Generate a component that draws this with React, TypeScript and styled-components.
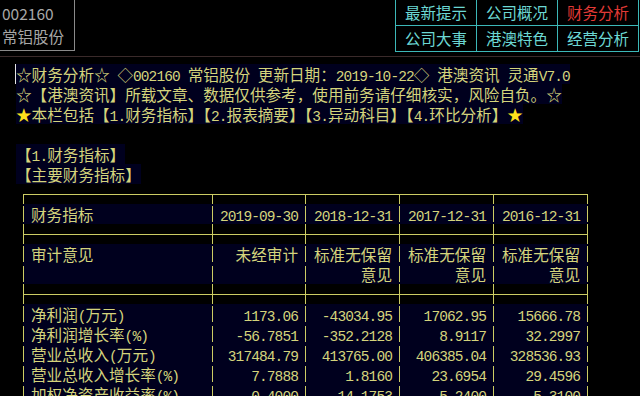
import React from "react";
import styled, { createGlobalStyle, css } from "styled-components";

const YELLOW = "#d4d47c";
const STAR = "#ffe21c";
const LINE = "#cccc64";
const NAVY = "#00001e";
const CYAN = "#3cb8b8";

const GlobalStyle = createGlobalStyle`
  html, body {
    margin: 0;
    padding: 0;
    background: #000;
  }
  body {
    width: 640px;
    height: 396px;
    overflow: hidden;
    font-family: "Noto Sans CJK SC", "Noto Sans", sans-serif;
  }
`;

/* half-width (ASCII) runs: tightened mono keeps the 7.8px cell of the terminal grid */
const Half = styled.span`
  font-family: "Liberation Mono", "DejaVu Sans Mono", monospace;
  font-size: 14.5px;
  letter-spacing: -0.9px;
`;

function Mixed({ text }: { text: string }) {
  const parts = text.match(/[\x20-\x7e]+|[^\x20-\x7e]+/g) ?? [];
  return (
    <>
      {parts.map((p, i) =>
        /^[\x20-\x7e]/.test(p) ? (
          <Half key={i}>{p}</Half>
        ) : (
          <React.Fragment key={i}>{p}</React.Fragment>
        )
      )}
    </>
  );
}

/* ---------- top bar ---------- */

const TopBar = styled.header`
  display: flex;
  justify-content: space-between;
  align-items: flex-start;
  height: 56px;
  border-bottom: 1px solid #3a2a2a;
`;

const StockBox = styled.div`
  box-sizing: border-box;
  width: 75px;
  height: 51px;
  padding: 2px 0 0 2px;
  border-right: 1px solid #8a8a8a;
  border-bottom: 1px solid #8a8a8a;
  display: flex;
  flex-direction: column;
  color: #a8a8a8;
  font-size: 15.5px;
  line-height: 23px;
  white-space: pre;
`;

const NavGrid = styled.nav`
  display: grid;
  grid-template-columns: repeat(3, 81px);
  grid-auto-rows: 26px;
  border-left: 1px solid ${CYAN};
  margin-right: 1px;
`;

const NavCell = styled.div<{ $active?: boolean }>`
  box-sizing: border-box;
  display: flex;
  align-items: center;
  justify-content: center;
  border-right: 1px solid ${CYAN};
  border-bottom: 1px solid ${CYAN};
  font-size: 15.5px;
  padding-bottom: 1px;
  color: ${(p) => (p.$active ? "#e23a36" : "#6cd8d4")};
`;

/* ---------- report text ---------- */

const Report = styled.main`
  padding: 7px 0 0 16px;
  color: ${YELLOW};
  font-size: 15.6px;
  line-height: 20px;
  white-space: pre;
`;

const TextLine = styled.div`
  height: 20px;
  display: flex;
`;

const Run = styled.span`
  background: ${NAVY};
`;

const Caret = styled.span`
  display: inline-block;
  width: 0;
  height: 20px;
  margin-left: -1px;
  border-left: 1px solid #e4e4e4;
  vertical-align: top;
`;

const Star = styled.span`
  color: ${STAR};
`;

/* ---------- box-drawn table ---------- */

type Kind = "top" | "mid" | "data";

const Table = styled.div`
  margin-left: 7px;
  display: flex;
  flex-direction: column;
`;

const TRow = styled.div`
  display: flex;
  height: 20px;
`;

const segment = (kind: Kind) =>
  kind === "top" ? "10px / 1px 10px" : kind === "mid" ? "0 / 1px 20px" : "2px / 1px 16px";

const Cell = styled.div<{ $w: number; $kind: Kind; $last?: boolean; $first?: boolean }>`
  box-sizing: border-box;
  width: ${(p) => p.$w}px;
  height: 20px;
  overflow: hidden;
  text-align: ${(p) => (p.$first ? "left" : "right")};
  padding: ${(p) => (p.$first ? "0 0 0 8px" : `0 ${p.$last ? 8 : 7}px 0 0`)};
  ${(p) => css`
    background:
      linear-gradient(${LINE}, ${LINE}) left ${segment(p.$kind)} no-repeat,
      ${p.$last ? `linear-gradient(${LINE}, ${LINE}) right ${segment(p.$kind)} no-repeat,` : ""}
      ${p.$kind !== "data" ? `linear-gradient(${LINE}, ${LINE}) left 10px / 100% 1px no-repeat,` : ""}
      ${p.$kind === "data" ? NAVY : "transparent"};
  `}
`;

const WIDTHS = [189, 93, 94, 94, 95];

type Row = { kind: Kind; cells?: string[] };

const ROWS: Row[] = [
  { kind: "top" },
  { kind: "data", cells: ["财务指标", "2019-09-30", "2018-12-31", "2017-12-31", "2016-12-31"] },
  { kind: "mid" },
  { kind: "data", cells: ["审计意见", "未经审计", "标准无保留", "标准无保留", "标准无保留"] },
  { kind: "data", cells: ["", "", "意见", "意见", "意见"] },
  { kind: "mid" },
  { kind: "data", cells: ["净利润(万元)", "1173.06", "-43034.95", "17062.95", "15666.78"] },
  { kind: "data", cells: ["净利润增长率(%)", "-56.7851", "-352.2128", "8.9117", "32.2997"] },
  { kind: "data", cells: ["营业总收入(万元)", "317484.79", "413765.00", "406385.04", "328536.93"] },
  { kind: "data", cells: ["营业总收入增长率(%)", "7.7888", "1.8160", "23.6954", "29.4596"] },
  { kind: "data", cells: ["加权净资产收益率(%)", "0.4000", "-14.1753", "5.2400", "5.3100"] },
];

const NAV = [
  { label: "最新提示" },
  { label: "公司概况" },
  { label: "财务分析", active: true },
  { label: "公司大事" },
  { label: "港澳特色" },
  { label: "经营分析" },
];

export default function App() {
  return (
    <>
      <GlobalStyle />
      <TopBar>
        <StockBox>
          <span>002160</span>
          <span>常铝股份</span>
        </StockBox>
        <NavGrid>
          {NAV.map((n) => (
            <NavCell key={n.label} $active={n.active}>
              {n.label}
            </NavCell>
          ))}
        </NavGrid>
      </TopBar>

      <Report>
        <TextLine>
          <Caret />
          <Run>
            <Mixed text="☆财务分析☆ ◇002160 常铝股份 更新日期：2019-10-22◇ 港澳资讯 灵通V7.0" />
          </Run>
        </TextLine>
        <TextLine>
          <Run>☆【港澳资讯】所载文章、数据仅供参考，使用前务请仔细核实，风险自负。☆</Run>
        </TextLine>
        <TextLine>
          <Run>
            <Star>★</Star>
            <Mixed text="本栏包括【1.财务指标】【2.报表摘要】【3.异动科目】【4.环比分析】" />
            <Star>★</Star>
          </Run>
        </TextLine>
        <TextLine />
        <TextLine>
          <Run>
            <Mixed text="【1.财务指标】" />
          </Run>
        </TextLine>
        <TextLine>
          <Run>【主要财务指标】</Run>
        </TextLine>

        <Table>
          {ROWS.map((row, r) => (
            <TRow key={r}>
              {WIDTHS.map((w, c) => (
                <Cell
                  key={c}
                  $w={w}
                  $kind={row.kind}
                  $first={c === 0}
                  $last={c === WIDTHS.length - 1}
                >
                  {row.cells ? <Mixed text={row.cells[c]} /> : null}
                </Cell>
              ))}
            </TRow>
          ))}
        </Table>
      </Report>
    </>
  );
}
